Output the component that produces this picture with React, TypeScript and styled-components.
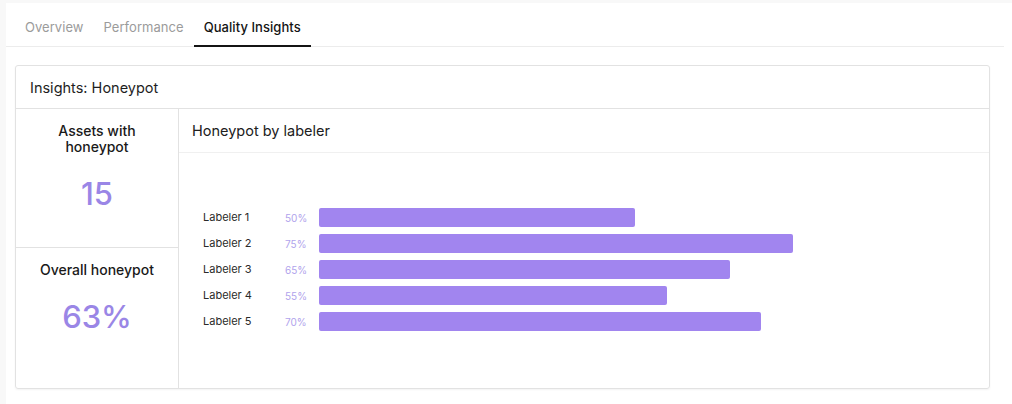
import React, { ReactElement } from 'react';
import styled, { createGlobalStyle } from 'styled-components';

const GlobalStyle = createGlobalStyle`
  html, body {
    margin: 0;
    padding: 0;
    background: #f8f8f8;
  }
  body {
    font-family: Inter, "Noto Sans", sans-serif;
    color: #1c1c1c;
  }
`;

const Page = styled.div`
  margin: 3px 0 0 6px;
  height: 401px;
  background: #ffffff;
  display: flex;
  flex-direction: column;
`;

const TabBar = styled.nav`
  display: flex;
  height: 44px;
  margin-right: 8px;
  padding-left: 9px;
  border-bottom: 1px solid #ececec;
  box-sizing: border-box;
`;

const Tab = styled.div<{ $active?: boolean }>`
  display: flex;
  align-items: center;
  padding: 5px 10px 0;
  font-size: 13px;
  letter-spacing: 0.05px;
  color: ${({ $active }) => ($active ? '#141414' : '#9b9b9b')};
  font-weight: ${({ $active }) => ($active ? 500 : 400)};
  border-bottom: 2px solid ${({ $active }) => ($active ? '#141414' : 'transparent')};
  margin-bottom: -1px;
`;

const Card = styled.section`
  margin: 18px 0 0 9px;
  width: 975px;
  height: 324px;
  box-sizing: border-box;
  border: 1px solid #e2e2e2;
  border-radius: 3px;
  box-shadow: 0 1px 2px rgba(0, 0, 0, 0.05);
  display: flex;
  flex-direction: column;
`;

const CardHeader = styled.header`
  height: 42px;
  display: flex;
  align-items: center;
  padding-left: 14px;
  font-size: 14.5px;
  color: #1e1e1e;
  border-bottom: 1px solid #e2e2e2;
`;

const CardBody = styled.div`
  flex: 1;
  display: grid;
  grid-template-columns: 163px 1fr;
`;

const StatColumn = styled.div`
  display: grid;
  grid-template-rows: 139px 1fr;
  border-right: 1px solid #e2e2e2;
`;

const StatCell = styled.div<{ $divided?: boolean }>`
  display: flex;
  flex-direction: column;
  align-items: center;
  padding-top: 14px;
  text-align: center;
  border-bottom: ${({ $divided }) => ($divided ? '1px solid #e2e2e2' : 'none')};
`;

const StatTitle = styled.div<{ $wide?: boolean }>`
  font-size: 14px;
  line-height: 16px;
  font-weight: 500;
  color: #1a1a1a;
  max-width: ${({ $wide }) => ($wide ? 'none' : '110px')};
`;

const StatValue = styled.div`
  margin-top: 21px;
  font-size: 31px;
  line-height: 36px;
  font-weight: 500;
  color: #9a86e6;
`;

const ChartPanel = styled.div`
  display: flex;
  flex-direction: column;
`;

const ChartHeader = styled.div`
  height: 43px;
  display: flex;
  align-items: center;
  padding-left: 13px;
  font-size: 14.5px;
  color: #202020;
  border-bottom: 1px solid #f0f0f0;
`;

const ChartArea = styled.div`
  flex: 1;
  display: flex;
  flex-direction: column;
  justify-content: center;
  gap: 7px;
  padding-left: 24px;
  padding-bottom: 2px;
`;

const BarRow = styled.div`
  display: flex;
  align-items: center;
  height: 19px;
`;

const BarLabel = styled.span`
  width: 82px;
  font-size: 11px;
  color: #2a2a2a;
  margin-top: -2px;
`;

const BarPercent = styled.span`
  width: 34px;
  font-size: 10px;
  color: #b0a3ec;
  margin-top: 1px;
`;

const BarTrack = styled.div`
  width: 632px;
  height: 19px;
`;

const BarFill = styled.div`
  height: 100%;
  background: #a185ef;
  border-radius: 2px;
`;

const labelers = [
  { name: 'Labeler 1', value: 50 },
  { name: 'Labeler 2', value: 75 },
  { name: 'Labeler 3', value: 65 },
  { name: 'Labeler 4', value: 55 },
  { name: 'Labeler 5', value: 70 },
];

function App(): ReactElement {
  return (
    <>
      <GlobalStyle />
      <Page>
        <TabBar>
          <Tab>Overview</Tab>
          <Tab>Performance</Tab>
          <Tab $active>Quality Insights</Tab>
        </TabBar>
        <Card>
          <CardHeader>Insights: Honeypot</CardHeader>
          <CardBody>
            <StatColumn>
              <StatCell $divided>
                <StatTitle>Assets with honeypot</StatTitle>
                <StatValue>15</StatValue>
              </StatCell>
              <StatCell>
                <StatTitle $wide>Overall honeypot</StatTitle>
                <StatValue>63%</StatValue>
              </StatCell>
            </StatColumn>
            <ChartPanel>
              <ChartHeader>Honeypot by labeler</ChartHeader>
              <ChartArea>
                {labelers.map((l) => (
                  <BarRow key={l.name}>
                    <BarLabel>{l.name}</BarLabel>
                    <BarPercent>{l.value}%</BarPercent>
                    <BarTrack>
                      <BarFill style={{ width: `${l.value}%` }} />
                    </BarTrack>
                  </BarRow>
                ))}
              </ChartArea>
            </ChartPanel>
          </CardBody>
        </Card>
      </Page>
    </>
  );
}

export default App;
